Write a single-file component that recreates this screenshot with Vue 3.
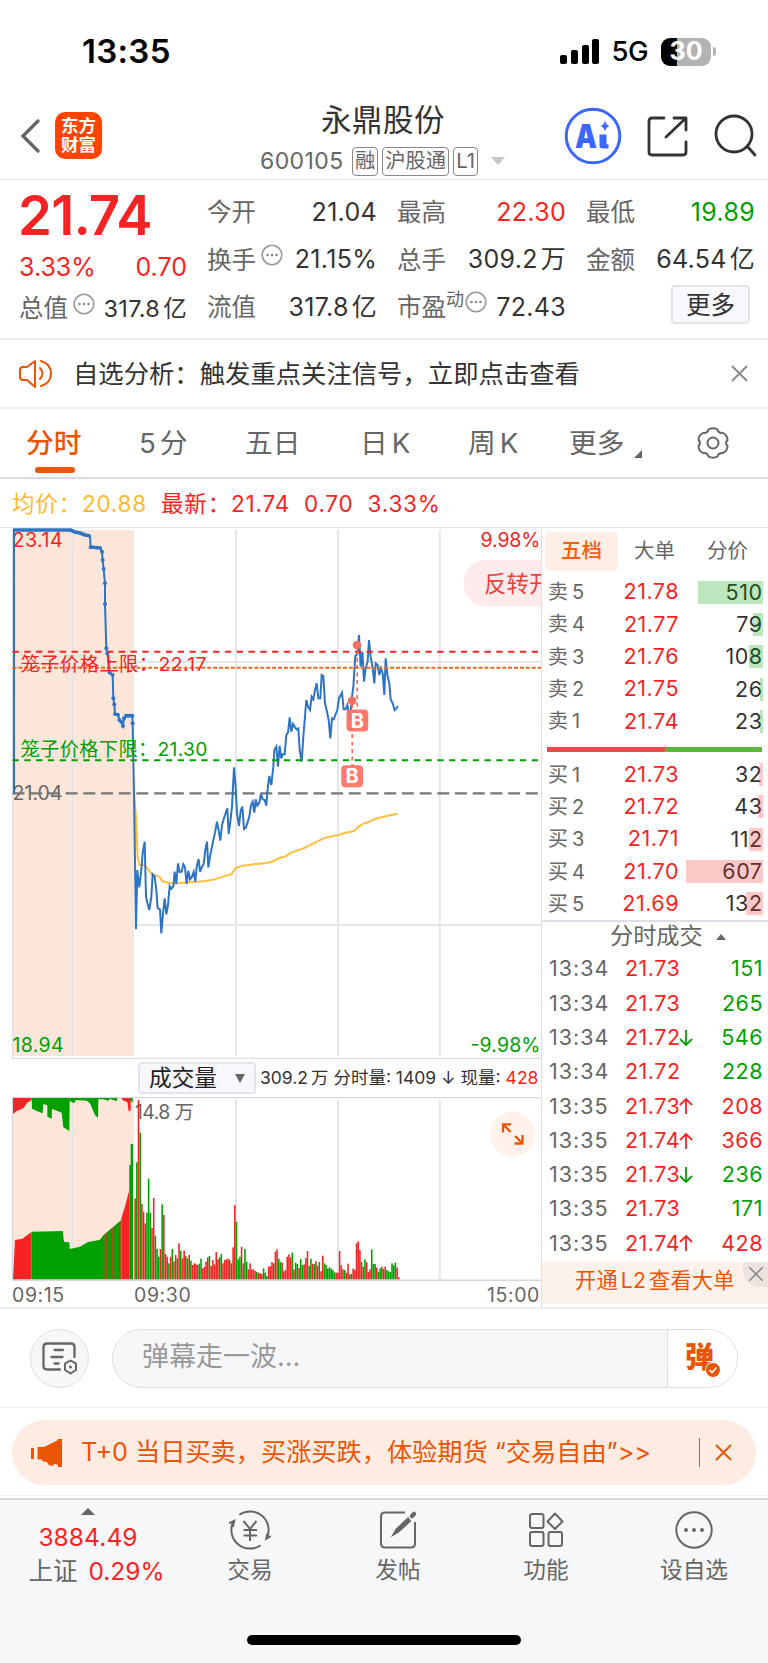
<template>
  <div class="page">
    <header class="status-bar">
      <span class="clock">13:35</span>
      <div class="status-right">
        <svg class="signal" width="40" height="26" viewBox="0 0 40 26">
          <rect x="0" y="16" width="7" height="9" rx="2" />
          <rect x="11" y="11" width="7" height="14" rx="2" />
          <rect x="22" y="6" width="7" height="19" rx="2" />
          <rect x="32" y="0" width="7" height="25" rx="2" />
        </svg>
        <span class="network">5G</span>
        <div class="battery"><span>30</span></div>
        <i class="battery-cap"></i>
      </div>
    </header>

    <nav class="title-bar">
      <svg class="back" width="22" height="36" viewBox="0 0 22 36">
        <path d="M19 3 L4 18 L19 33" fill="none" stroke="#666" stroke-width="3.4" stroke-linecap="round" />
      </svg>
      <div class="logo"><span>东方</span><span>财富</span></div>
      <div class="stock">
        <div class="stock-name">永鼎股份</div>
        <div class="stock-code">
          <span class="code">600105</span>
          <span class="tag">融</span>
          <span class="tag">沪股通</span>
          <span class="tag">L1</span>
          <i class="caret-down"></i>
        </div>
      </div>
      <div class="title-actions">
        <svg width="58" height="58" viewBox="0 0 58 58">
          <circle cx="29" cy="29" r="26.8" fill="none" stroke="#3a68fc" stroke-width="3" />
          <text x="11" y="41" textLength="22" lengthAdjust="spacingAndGlyphs" class="ai-text">A</text>
          <path d="M35.500 27.500 H42.500 V36.500 Q42.500 37.500 44.500 37.500 V41.500 H38.500 Q35.500 41.500 35.500 38 Z" fill="#3a68fc" />
          <path d="M41 13.500 Q42 18 45.500 19 Q42 20 41 24.500 Q40 20 36.500 19 Q40 18 41 13.500 Z" fill="#3a68fc" />
        </svg>
        <svg width="42" height="42" viewBox="0 0 42 42" fill="none" stroke="#333" stroke-width="2.8" stroke-linecap="round" stroke-linejoin="round">
          <path d="M17 3 H5 Q2 3 2 6 V37 Q2 40 5 40 H36 Q39 40 39 37 V27" />
          <path d="M27 3 H39 V15 M39 3 L19 22" />
        </svg>
        <svg width="43" height="43" viewBox="0 0 43 43" fill="none" stroke="#333" stroke-width="2.8">
          <circle cx="20" cy="20" r="18" />
          <path d="M33 32 L41 41" stroke-linecap="round" />
        </svg>
      </div>
    </nav>

    <section class="quote">
      <div class="quote-main">
        <div class="last-price">21.74</div>
        <div class="quote-row red change"><span>3.33%</span><span>0.70</span></div>
        <div class="quote-row small-val">
          <span class="label">总值<MoreDots /></span>
          <span class="value">317.8<b>亿</b></span>
        </div>
      </div>
      <div v-for="(col, i) in quoteCols" :key="i" class="quote-col">
        <div v-for="cell in col" :key="cell.label" class="quote-row">
          <span class="label">{{ cell.label }}<sup v-if="cell.sup">{{ cell.sup }}</sup><MoreDots v-if="cell.dots" /></span>
          <span class="value" :class="cell.color">{{ cell.value }}<b v-if="cell.unit">{{ cell.unit }}</b></span>
        </div>
        <button v-if="i === 2" class="btn-more">更多</button>
      </div>
    </section>

    <section class="notice">
      <svg width="34" height="30" viewBox="0 0 34 30" fill="none" stroke="#ea5504" stroke-width="2" stroke-linecap="round" stroke-linejoin="round">
        <path d="M16 2 L8 8 H4 Q1 8 1 11 V18 Q1 21 4 21 H8 L16 28 Z" />
        <path d="M21 9 Q26 14.500 21 20 M22 2 Q32 5 32 14.500 Q32 24 22 27" />
      </svg>
      <span class="notice-text">自选分析：触发重点关注信号，立即点击查看</span>
      <svg width="17" height="17" viewBox="0 0 17 17" stroke="#888" stroke-width="1.8"><path d="M1 1 L16 16 M16 1 L1 16" /></svg>
    </section>

    <section class="tabs">
      <div
        v-for="tab in tabs"
        :key="tab"
        class="tab"
        :class="{ active: tab === activeTab, mixed: /[5K]/.test(tab) }"
        @click="activeTab = tab"
      >
        {{ tab }}<i v-if="tab === '更多'" class="corner"></i>
      </div>
      <svg class="gear" width="34" height="34" viewBox="0 0 34 34" fill="none" stroke="#666" stroke-width="2">
        <path d="M12.500 3.500 Q17 1 21.500 3.500 Q22.500 7.500 27 7 Q31.500 9.500 31.500 14 Q28.500 17 31.500 20 Q31.500 24.500 27 27 Q22.500 26.500 21.500 30.500 Q17 33 12.500 30.500 Q11.500 26.500 7 27 Q2.500 24.500 2.500 20 Q5.500 17 2.500 14 Q2.500 9.500 7 7 Q11.500 7.500 12.500 3.500 Z" />
        <circle cx="17" cy="17" r="5.5" />
      </svg>
    </section>

    <section class="summary">
      <span class="avg">均价：20.88</span>
      <span class="red">最新：21.74</span>
      <span class="red">0.70</span>
      <span class="red">3.33%</span>
    </section>

    <main class="board">
      <div class="charts">
        <svg class="price-chart" width="541" height="531" viewBox="0 528 541 531">
          <rect x="12.500" y="530" width="121.500" height="526" fill="#fce6d9" />
          <g stroke="#e3e6ec" stroke-width="2">
            <path v-for="x in gridX" :key="x" :d="`M${x} 530 V1056`" />
            <path d="M134 662 H541 M134 925 H541" />
          </g>
          <path d="M12.500 528 V1058.300 H542" fill="none" stroke="#dcdfe6" stroke-width="1.300" />
          <g class="axis-text">
            <text x="12.500" y="547" textLength="50" fill="#f52323">23.14</text>
            <text x="480.500" y="547" textLength="60" fill="#f52323">9.98%</text>
            <text x="12.500" y="1051.500" textLength="51" fill="#00a000">18.94</text>
            <text x="470.500" y="1051.500" textLength="70" fill="#00a000">-9.98%</text>
            <text x="12.500" y="799.500" textLength="50" fill="#666">21.04</text>
          </g>
          <path d="M12.500 793.300 H538" stroke="#777" stroke-width="2.200" stroke-dasharray="12 5.700" />
          <g transform="translate(0 520) scale(0.33333)" fill="none" stroke-linejoin="round">
            <polyline :points="avgLine" stroke="#ffbe3c" stroke-width="6" />
            <polyline :points="priceLine" stroke="#2f74c3" stroke-width="6" stroke-linejoin="miter" />
            <polyline :points="auctionTop" stroke="#2f74c3" stroke-width="11" />
            <circle v-for="(p, i) in auctionDots" :key="i" :cx="p[0]" :cy="p[1]" r="6" fill="#2f74c3" />
          </g>
          <path d="M12.500 651.700 H539" stroke="#f52323" stroke-width="2" stroke-dasharray="6.300 5.500" />
          <path d="M12.500 667.700 H541" stroke="#ea6a1a" stroke-width="2" stroke-dasharray="4 1.900" />
          <path d="M12.500 760.300 H539" stroke="#00a000" stroke-width="2" stroke-dasharray="6.300 5.500" />
          <g class="cage-text">
            <text x="20.500" y="671" textLength="186" fill="#f52323">笼子价格上限：22.17</text>
            <text x="20.500" y="756" textLength="187" fill="#00a000">笼子价格下限：21.30</text>
          </g>
          <g stroke="#ff6a5c" stroke-width="1.700" stroke-dasharray="4 3.500">
            <path d="M357.200 650 V710 M352.200 704 V766" />
          </g>
          <g fill="#ff6f60">
            <circle cx="357" cy="645" r="4.300" />
            <circle cx="352" cy="700.700" r="4.300" />
            <rect x="346.500" y="709.500" width="21.700" height="22" rx="4" fill-opacity="0.920" />
            <rect x="341.300" y="765.300" width="21.700" height="22" rx="4" fill-opacity="0.920" />
          </g>
          <g class="badge-text">
            <text x="357.300" y="727.500">B</text>
            <text x="352.200" y="783.300">B</text>
          </g>
          <path d="M542 559.700 H487 A23.300 23.300 0 0 0 487 606.500 H542 Z" fill="#fdeaea" />
          <text x="484" y="592" class="pill-text">反转开</text>
        </svg>

        <div class="volume-head">
          <button class="indicator">成交量<i></i></button>
          <span class="volume-info">309.2<b>万</b> 分时量: 1409 ↓ 现量: <em>428</em></span>
        </div>

        <svg class="volume-chart" width="541" height="185" viewBox="0 1097 541 185">
          <rect x="12.500" y="1098" width="121.500" height="182" fill="#fce6d9" />
          <g stroke="#e3e6ec" stroke-width="2">
            <path v-for="x in gridX" :key="x" :d="`M${x} 1100 V1280`" />
          </g>
          <path d="M12.500 1280 V1097.500 H542" fill="none" stroke="#d5d8e0" stroke-width="1.300" />
          <path d="M12.500 1280.300 H542" stroke="#d5d8e0" stroke-width="1.500" />
          <text x="135" y="1119" textLength="59" class="axis-text" fill="#666">14.8 万</text>
          <g transform="translate(0 1050) scale(0.33333)">
            <path :d="auctionRed" fill="#f52323" />
            <path :d="auctionGreen" fill="#00a000" />
            <path d="M312 555 V688 M320 548 V688 M329 542 V688 M337 534 V688 M346 528 V688 M353 520 V688 M361 514 V688" stroke="#b4501e" stroke-width="3" />
            <rect v-for="(b, i) in bars" :key="i" :x="b.x" :y="688 - b.h" width="4.700" :height="b.h" :fill="b.fill" />
          </g>
          <circle cx="512.700" cy="1134" r="22.500" fill="#fff1eb" />
          <g fill="none" stroke="#ea5504" stroke-width="2.300">
            <path d="M511 1124.300 H503 V1132.500 M503 1124.300 L510.500 1132" />
            <path d="M514.500 1143.500 H522.500 V1135 M522.500 1143.500 L515 1136" />
          </g>
        </svg>

        <div class="time-axis"><span>09:15</span><span>09:30</span><span>15:00</span></div>
      </div>

      <aside class="depth">
        <div class="depth-tabs">
          <span class="on">五档</span><span>大单</span><span>分价</span>
        </div>
        <div class="levels">
          <div v-for="row in sells" :key="row.name" class="level">
            <span class="lv-name">{{ row.name }}</span>
            <span class="lv-price">{{ row.price }}</span>
            <span class="lv-vol"><i class="sell" :style="{ width: row.w + 'px' }"></i>{{ row.vol }}</span>
          </div>
        </div>
        <div class="ratio"></div>
        <div class="levels">
          <div v-for="row in buys" :key="row.name" class="level">
            <span class="lv-name">{{ row.name }}</span>
            <span class="lv-price">{{ row.price }}</span>
            <span class="lv-vol"><i class="buy" :style="{ width: row.w + 'px' }"></i>{{ row.vol }}</span>
          </div>
        </div>
        <div class="ticks-title">分时成交<i></i></div>
        <div class="ticks">
          <div v-for="(t, i) in ticks" :key="i" class="tick">
            <span class="tk-time">{{ t[0] }}</span>
            <span class="tk-price">{{ t[1] }}</span>
            <svg class="tk-arrow" width="14" height="18" viewBox="0 0 14 18" fill="none" stroke-width="1.800">
              <path v-if="t[2] === 'up'" d="M7 17 V2 M1 8 L7 2 L13 8" stroke="#f52323" />
              <path v-if="t[2] === 'down'" d="M7 1 V16 M1 10 L7 16 L13 10" stroke="#00a000" />
            </svg>
            <span class="tk-vol" :class="t[4]">{{ t[3] }}</span>
          </div>
        </div>
        <div class="l2">
          <span>开通<u>L2</u>查看大单</span>
          <div class="l2-close">
            <svg width="14" height="14" viewBox="0 0 14 14" stroke="#888" stroke-width="1.500"><path d="M0 0 L14 14 M14 0 L0 14" /></svg>
          </div>
        </div>
      </aside>
    </main>

    <section class="danmu">
      <div class="round-btn">
        <svg width="36" height="34" viewBox="0 0 36 34" fill="none" stroke="#666" stroke-width="2.300" stroke-linecap="round">
          <path d="M18 27.500 H5 Q1.500 27.500 1.500 24 V5 Q1.500 1.500 5 1.500 H29 Q32.500 1.500 32.500 5 V15" />
          <path d="M12.500 8 H21 M9.500 15 H20.500 M12.500 21.500 H16.500" />
          <path d="M28.500 18.500 L34 21.700 V28 L28.500 31.500 L23 28 V21.700 Z" stroke-width="2" stroke-linejoin="round" />
          <circle cx="28.500" cy="25" r="1.500" fill="#666" stroke="none" />
        </svg>
      </div>
      <div class="danmu-box">
        <span class="placeholder">弹幕走一波...</span>
        <div class="danmu-toggle">
          <span>弹</span>
          <svg width="16" height="16" viewBox="0 0 16 16"><circle cx="8" cy="8" r="7.500" fill="#ea5504" stroke="#fff" /><path d="M4.500 8 L7 10.500 L11.500 5.500" fill="none" stroke="#fff" stroke-width="1.600" /></svg>
        </div>
      </div>
    </section>

    <section class="promo-wrap">
      <div class="promo">
        <svg width="32" height="28" viewBox="0 0 32 28" fill="#ea5504">
          <path d="M0 9 H3 V20 H0 Z M6.500 8 H13 L27 1 V0 H31 V28 H27 V26 L23 24.500 V26.500 H18 L16 23 L12 22.500 L10.500 20.500 H6.500 Z" />
        </svg>
        <span class="promo-text">T+0 当日买卖，买涨买跌，体验期货 “交易自由”&gt;&gt;</span>
        <i class="promo-line"></i>
        <svg width="17" height="17" viewBox="0 0 17 17" stroke="#ea5504" stroke-width="1.900"><path d="M1 1 L16 16 M16 1 L1 16" /></svg>
      </div>
    </section>

    <footer class="bottom-bar">
      <div class="index">
        <i></i>
        <div class="index-val">3884.49</div>
        <div class="index-row"><span>上证</span><em>0.29%</em></div>
      </div>
      <div class="nav-item">
        <svg width="42" height="40" viewBox="0 0 42 40" fill="none" stroke="#666" stroke-width="2">
          <path d="M10.300 4.800 A18.600 18.600 0 0 1 37.800 28 M31.700 35.200 A18.600 18.600 0 0 1 4.200 12" />
          <path d="M0 13.300 L5.200 10.800 L4 17 M41.800 26 L37.300 28.700 L38.300 23.500" />
          <path d="M14.500 11 L21 19 L27.500 11 M14.500 20 H28 M14.500 25.500 H28 M21 19 V31" />
        </svg>
        <span>交易</span>
      </div>
      <div class="nav-item">
        <svg width="42" height="40" viewBox="0 0 42 40" fill="none" stroke="#666" stroke-width="2">
          <path d="M28 2.500 H8 Q4 2.500 4 6.500 V33.500 Q4 37.500 8 37.500 H34 Q38 37.500 38 33.500 V12" />
          <path d="M31 8.500 L19.500 19.500 L16.500 24.500 L21 22 L33 11 Z" fill="#666" />
          <path d="M35 6 L37 4" stroke-width="4.500" stroke-linecap="round" />
        </svg>
        <span>发帖</span>
      </div>
      <div class="nav-item">
        <svg width="42" height="40" viewBox="0 0 42 40" fill="none" stroke="#666" stroke-width="2">
          <rect x="5" y="4" width="13.500" height="14" rx="2" />
          <rect x="5" y="22" width="13.500" height="14" rx="2" />
          <rect x="23.500" y="22" width="13.500" height="14" rx="2" />
          <path d="M30 3.500 L37.500 11.500 L30 19 L22.500 11.500 Z" stroke-linejoin="round" />
        </svg>
        <span>功能</span>
      </div>
      <div class="nav-item">
        <svg width="42" height="40" viewBox="0 0 42 40" fill="none" stroke="#666" stroke-width="2">
          <circle cx="21" cy="20" r="17.700" />
          <g fill="#666" stroke="none"><circle cx="13" cy="20" r="2" /><circle cx="21" cy="20" r="2" /><circle cx="29" cy="20" r="2" /></g>
        </svg>
        <span>设自选</span>
      </div>
    </footer>
    <div class="home"><i></i></div>
  </div>
</template>

<script setup>
import { ref, h } from 'vue'

const MoreDots = () => h('svg', { class: 'dots', width: 22, height: 22, viewBox: '0 0 22 22' }, [
  h('circle', { cx: 11, cy: 11, r: 9.8, fill: 'none', stroke: '#999', 'stroke-width': 1.6 }),
  ...[6.5, 11, 15.5].map(cx => h('circle', { cx, cy: 11, r: 1.3, fill: '#888' }))
])

const quoteCols = [
  [
    { label: '今开', value: '21.04' },
    { label: '换手', value: '21.15%', dots: true },
    { label: '流值', value: '317.8', unit: '亿' }
  ],
  [
    { label: '最高', value: '22.30', color: 'red' },
    { label: '总手', value: '309.2', unit: '万' },
    { label: '市盈', value: '72.43', sup: '动', dots: true }
  ],
  [
    { label: '最低', value: '19.89', color: 'green' },
    { label: '金额', value: '64.54', unit: '亿' }
  ]
]

const tabs = ['分时', '5分', '五日', '日K', '周K', '更多']
const activeTab = ref('分时')

const gridX = [73, 236, 338, 439.7]

// Точки линий заданы в третях пикселя
const shift = (str, dx, dy) => str.split(' ').map(p => {
  const [x, y] = p.split(',').map(Number)
  return `${x + dx},${y + dy}`
}).join(' ')

const auctionTop = '40,30 212,30 222,35 240,39 255,45 270,48'
const auction = '42,820 42,30 212,30 222,36 240,40 255,45 270,48 272,82 300,84 306,95 308,120 311,147 315,190 315,252 319,385 322,400 327,425 329,458 338,465 340,535 343,553 345,582 354,584 358,600 364,606 369,618 372,595 378,587 397,587 398,610 402,820'
const auctionDots = auction.split(' ').slice(7, -1).map(p => p.split(',').map(Number))
  .concat([[280, 82], [290, 83], [384, 587], [390, 587]])

const morning = shift('42,40 48,448 52,270 58,322 64,270 68,220 74,185 78,350 83,372 88,390 94,350 98,283 104,290 109,330 113,385 120,388 124,460 129,400 134,355 139,403 144,375 149,318 154,326 160,320 164,275 169,312 174,250 179,276 185,275 190,253 195,262 200,312 205,272 210,298 216,290 221,276 226,305 230,260 236,237 240,275 246,260 251,252 256,210 261,185 265,262 270,230 276,200 285,158 291,125 296,152 301,182 306,135 314,108 322,85 326,162 331,125 336,80 342,-38 347,20 351,100 357,138 362,92 367,80 372,147 378,142 388,110 393,75 398,65 403,98 407,58 412,77 418,68 423,42 428,58 434,60 439,77 443,25 448,-12 454,15', 360, 780)
const afternoon = shift('10,740 13,690 19,680 24,740 29,678 34,715 38,703 44,703 49,645 54,638 59,592 64,635 69,612 75,622 80,628 85,625 89,690 95,725 100,650 105,590 109,540 114,560 120,570 125,530 130,538 135,510 140,490 145,535 151,535 155,465 160,468 165,550 171,575 176,600 181,655 186,595 191,598 196,585 202,570 207,535 216,518 221,568 227,568 232,555 236,580 240,600 246,530 250,500 256,408 262,402 267,345 272,440 277,395 282,485 287,445 293,425 297,360 302,410 308,445 313,490 317,430 323,435 328,465 333,445 338,460 343,525 347,415 352,465 358,490 362,538 368,550 374,570 378,566 384,558', 810, 0)
const priceLine = [auction, morning, afternoon].join(' ')

const avgLine = shift('42,40 48,110 53,235 59,256 72,254 80,262 95,283 118,290 128,304 150,310 180,309 250,304 280,299 310,290 335,282 347,264 370,257 400,253 440,249 460,244 475,235 495,230 515,217 550,205 580,190 615,173 652,166 670,160 702,153 715,140 735,129 745,127 762,118 790,110 832,101', 360, 780)

const auctionRed = 'M39 688 L45 570 68 566 75 560 95 546 V688 Z M39 144 V192 L50 183 70 175 80 160 95 150 V144 Z M364 688 V504 L375 470 388 420 V688 Z M364 144 L370 152 382 156 386 184 392 182 V144 Z'
const auctionGreen = 'M95 688 V545 L188 543 192 575 208 577 209 597 240 590 262 577 300 569 310 556 364 510 V688 Z M388 688 V345 H392 V282 H399 V688 Z M95 144 L96 176 112 184 128 190 130 162 142 166 V200 L155 206 156 176 185 188 190 232 208 243 209 152 222 160 228 150 260 152 270 160 285 195 294 204 295 148 310 148 325 152 330 146 350 154 352 144 Z M391 144 V152 L398 158 V144 Z'

const volumes = 'r241 g349 r536 g438 r224 r201 r166 g198 g300 g198 r152 r242 g129 g89 g66 r89 g223 r191 r74 r66 g46 r66 g89 r51 r71 g61 r106 g84 r61 r84 g68 g61 r71 g54 r41 r46 r43 r41 g45 g60 r31 r36 r51 r64 g68 r38 r56 r43 r80 r58 g64 g74 r46 r56 r58 r60 g56 r46 r94 r221 g170 g58 g66 r96 r46 g89 g51 r28 r46 r28 r28 r23 g20 r18 r16 r14 g31 g18 g8 r36 r38 r50 g46 r81 r88 g60 g50 r48 r22 r26 r66 r73 r64 g78 r28 g48 g44 r32 g59 g41 r43 r62 r83 g38 g60 r45 g44 r52 r38 g50 r22 r69 g46 g41 g30 g34 g30 g26 g19 r18 r18 r83 r40 r28 g26 r18 r45 g13 g15 r30 r26 r106 r112 r86 g51 r36 g58 r49 r20 r28 g88 g44 g44 r33 g20 g31 r36 g29 r36 g26 g22 g20 g46 g40 g48 r34 r4'.split(' ')
const step = (1194 - 403) / (volumes.length - 1)
const bars = volumes.map((v, i) => ({
  x: 403 + i * step,
  h: Number(v.slice(1)) + 2,
  fill: v[0] === 'r' ? '#f52323' : '#00a000'
}))

const sells = [
  { name: '卖5', price: '21.78', vol: 510, w: 64.5 },
  { name: '卖4', price: '21.77', vol: 79, w: 10 },
  { name: '卖3', price: '21.76', vol: 108, w: 14 },
  { name: '卖2', price: '21.75', vol: 26, w: 3 },
  { name: '卖1', price: '21.74', vol: 23, w: 3 }
]
const buys = [
  { name: '买1', price: '21.73', vol: 32, w: 4 },
  { name: '买2', price: '21.72', vol: 43, w: 5 },
  { name: '买3', price: '21.71', vol: 112, w: 14 },
  { name: '买4', price: '21.70', vol: 607, w: 77 },
  { name: '买5', price: '21.69', vol: 132, w: 16.5 }
]

const ticks = [
  ['13:34', '21.73', '', 151, 'green'],
  ['13:34', '21.73', '', 265, 'green'],
  ['13:34', '21.72', 'down', 546, 'green'],
  ['13:34', '21.72', '', 228, 'green'],
  ['13:35', '21.73', 'up', 208, 'red'],
  ['13:35', '21.74', 'up', 366, 'red'],
  ['13:35', '21.73', 'down', 236, 'green'],
  ['13:35', '21.73', '', 171, 'green'],
  ['13:35', '21.74', 'up', 428, 'red']
]
</script>

<style>
body { background: #fff; }
</style>

<style scoped>
.page {
  width: 768px;
  height: 1663px;
  overflow: hidden;
  background: #fff;
  color: #333;
  font-family: Inter, "Noto Sans CJK SC", sans-serif;
  font-size: 24px;
  line-height: 1;
  white-space: nowrap;
}
.page * { box-sizing: border-box; }
svg { display: block; flex: none; }
b { font-weight: 400; margin-left: 3px; }
em { font-style: normal; color: #f52323; }
.red { color: #f52323; }
.green { color: #00a000; }

.status-bar {
  height: 92px;
  padding: 11px 52px 0 82px;
  display: flex;
  align-items: center;
  justify-content: space-between;
  color: #000;
}
.clock { font-size: 33px; font-weight: 600; letter-spacing: 0.3px; }
.status-right { display: flex; align-items: center; }
.network { font-size: 27.5px; font-weight: 500; margin-left: 11px; letter-spacing: -0.5px; }
.battery {
  width: 50px;
  height: 28px;
  margin-left: 13px;
  border-radius: 9px;
  background: linear-gradient(90deg, #000 32%, #b3b3b3 32%);
  color: #fff;
  font-size: 25px;
  font-weight: 700;
  display: flex;
  align-items: center;
  justify-content: center;
}
.battery-cap { width: 3px; height: 9px; margin-left: 2px; background: #b3b3b3; border-radius: 0 4px 4px 0; }

.title-bar {
  height: 88px;
  padding-left: 19px;
  display: flex;
  align-items: center;
  border-bottom: 1px solid #ebebeb;
}
.logo {
  width: 47px;
  height: 47px;
  margin: -1px 0 0 14px;
  border-radius: 10px;
  background: #ff4400;
  color: #fff;
  font-size: 17.5px;
  font-weight: 700;
  line-height: 19px;
  display: flex;
  flex-direction: column;
  align-items: center;
  justify-content: center;
}
.stock { width: 246px; margin-left: 158px; padding-top: 6px; }
.stock-name { font-size: 30.5px; letter-spacing: 0.5px; color: #333; line-height: 36px; padding-left: 61px; }
.stock-code { height: 29px; margin-top: 9px; display: flex; align-items: center; color: #666; }
.code { font-size: 23px; width: 92px; flex: none; letter-spacing: 0.4px; }
.tag {
  border: 1.5px solid #888;
  border-radius: 4px;
  height: 29px;
  line-height: 26px;
  padding: 0 2px;
  margin-right: 4px;
  font-size: 20.3px;
}
.caret-down { margin-left: 9px; border: 7px solid transparent; border-top: 8px solid #c8c8c8; border-bottom: 0; flex: none; }
.title-actions { display: flex; align-items: center; margin-left: 58px; gap: 25px; }
.ai-text { font: 900 33px Inter, sans-serif; fill: #3a68fc; }

.quote {
  height: 160px;
  padding: 8px 14px 0 19px;
  display: grid;
  grid-template-columns: 168px 170px 169px 169px;
  column-gap: 20px;
  border-bottom: 2px solid #ebebeb;
}
.last-price {
  height: 54px;
  font-size: 54.5px;
  line-height: 54px;
  font-weight: 600;
  letter-spacing: -0.8px;
  margin-left: -1px;
  color: #f52323;
}
.quote-main .change { height: 48px; padding-top: 2px; letter-spacing: 0; }
.quote-row { height: 47.5px; padding-top: 1px; display: flex; align-items: center; justify-content: space-between; letter-spacing: 0.3px; font-size: 25px; }
.quote-main .small-val { height: 36px; }
.quote-main .value { font-size: 23.5px; }
.label { display: flex; align-items: center; font-size: 24.5px; color: #666; letter-spacing: 0; }
.label sup { font-size: 18px; align-self: flex-start; margin-top: -4px; line-height: 18px; }
:deep(.dots) { margin: -10px 0 0 5px; }
sup + :deep(.dots) { margin-left: 1px; }
.btn-more {
  display: block;
  width: 79px;
  height: 39px;
  margin: 2px 5px 0 auto;
  padding: 0;
  border: 2px solid #e2e5eb;
  border-radius: 4px;
  background: #f6f8fb;
  color: #333;
  font-family: inherit;
  font-size: 24.5px;
  line-height: 34px;
}

.notice { height: 69px; padding: 0 20px 0 19px; display: flex; align-items: center; border-bottom: 2px solid #ebecee; }
.notice-text { flex: 1; margin-left: 20px; font-size: 25.35px; }

.tabs {
  height: 70px;
  padding-left: 26px;
  display: grid;
  grid-template-columns: 113px 106px 115px 108px 101px 128px 40px;
  border-bottom: 2px solid #d9dbe2;
  color: #666;
  font-size: 27.7px;
}
.tab { height: 68px; line-height: 69px; display: flex; }
.tab.mixed { letter-spacing: 4px; }
.tab.active { color: #ea5504; font-weight: 500; flex-direction: column; }
.tab.active::after { content: ''; width: 40px; height: 6px; border-radius: 3px; background: #ea5504; margin: -11px 0 0 9px; flex: none; }
.corner { width: 0; border-left: 8px solid transparent; border-bottom: 8px solid #666; height: 0; margin: 41px 0 0 10px; }
.gear { margin: 17px 0 0 -1px; }

.summary { height: 48px; padding: 3px 12px 0; display: flex; align-items: center; gap: 14px; font-size: 22.5px; letter-spacing: 0.8px; }
.avg { color: #ffb92e; }

.board { height: 782px; display: grid; grid-template-columns: 541px 227px; border-bottom: 2px solid #efefef; }
.charts { border-top: 1px solid #e0e2e8; }
.axis-text { font-size: 19.5px; }
.cage-text { font-size: 19.3px; }
.badge-text { font-size: 20px; font-weight: 700; fill: #fff; text-anchor: middle; }
.pill-text { font-size: 22.5px; fill: #e8423f; }
.volume-head { height: 38px; padding-left: 138px; display: flex; align-items: center; }
.indicator {
  width: 118px;
  height: 32px;
  padding: 0 9px;
  border: 2px solid #e2e5eb;
  border-radius: 4px;
  background: #f6f8fb;
  color: #222;
  font-family: inherit;
  font-size: 22.7px;
  line-height: 28px;
  display: flex;
  align-items: center;
  justify-content: space-between;
}
.indicator i { border: 5px solid transparent; border-top: 9px solid #666; border-bottom: 0; }
.volume-info { font-size: 17.5px; margin-left: 4px; }
.time-axis { height: 25px; display: grid; grid-template-columns: 122px 353px 54px; padding-left: 12px; padding-top: 4px; font-size: 19.5px; letter-spacing: 0.6px; color: #666; }

.depth { border-left: 1px solid #dcdfe6; border-top: 1px solid #e0e2e8; height: 780px; }
.depth-tabs { height: 48px; padding: 4px 0 0 3px; display: flex; font-size: 20.5px; color: #666; }
.depth-tabs span { width: 73px; height: 39px; line-height: 38px; text-align: center; }
.depth-tabs .on { background: #feeee6; color: #ff5c0a; border-radius: 5px; font-weight: 500; }
.levels { font-size: 21.5px; letter-spacing: 0.5px; }
.level { height: 32.3px; display: grid; grid-template-columns: 60px 77px 83.500px; align-items: center; }
.lv-name { padding-left: 6px; color: #666; font-size: 20px; letter-spacing: 4px; }
.lv-price { text-align: right; color: #f52323; }
.lv-vol { position: relative; text-align: right; color: #333; line-height: 23px; }
.lv-vol i { position: absolute; right: 0; top: 0; height: 23px; }
.sell { background: rgba(0, 160, 0, 0.26); }
.buy { background: rgba(245, 35, 35, 0.25); }
.ratio { width: 215px; height: 5px; margin: 10px 0 6px 5px; background: linear-gradient(125deg, #ee4848 55%, #57b83a 55%); }
.ticks-title {
  height: 32px;
  border-top: 2px solid #dcdfe6;
  display: flex;
  align-items: center;
  padding-left: 68px;
  font-size: 23.2px;
  color: #666;
}
.ticks-title i { margin-left: 13px; border: 5px solid transparent; border-bottom: 6px solid #666; border-top: 0; }
.ticks { font-size: 21.5px; letter-spacing: 0.5px; }
.tick { height: 34.3px; display: flex; align-items: center; padding-left: 7px; }
.tk-time { width: 76px; color: #666; letter-spacing: 1px; }
.tk-price { width: 54px; text-align: right; color: #f52323; }
.tk-vol { width: 69px; text-align: right; margin-left: auto; margin-right: 5px; }
.l2 { height: 42px; margin-top: 1px; background: #fdf1ec; color: #ea5504; font-size: 21.2px; display: flex; justify-content: space-between; padding-left: 33px; line-height: 37px; letter-spacing: 0.2px; }
.l2 u { text-decoration: none; margin: 0 3px; }
.l2-close { width: 25px; height: 25px; background: #ece3df; border-bottom-left-radius: 16px; display: flex; align-items: center; justify-content: center; }

.danmu { height: 99px; padding: 20px 30px 0; display: flex; border-bottom: 1px solid #f0f0f0; }
.round-btn { width: 59px; height: 59px; border: 1.5px solid #dcdfe6; border-radius: 50%; background: #f6f7f9; display: flex; align-items: center; justify-content: center; }
.danmu-box { width: 626px; height: 59px; margin-left: 23px; border: 1.5px solid #dcdfe6; border-radius: 30px; background: #f6f7f9; display: flex; overflow: hidden; }
.placeholder { flex: 1; padding-left: 29px; line-height: 53px; font-size: 27px; color: #999; }
.danmu-toggle { width: 70px; border-left: 1.5px solid #dcdfe6; background: #fff; display: flex; padding: 13px 0 0 17px; color: #ea5504; font-size: 29px; font-weight: 900; }
.danmu-toggle svg { margin: 19px 0 0 -9px; }

.promo-wrap { height: 88px; padding: 12px 12px 0; border-bottom: 1px solid #f1f1f1; }
.promo { height: 65px; border-radius: 33px; background: #feece3; padding: 0 24px 0 19px; display: flex; align-items: center; color: #ea5504; }
.promo-text { flex: 1; margin-left: 18px; font-size: 25.2px; }
.promo-line { width: 1.5px; height: 29px; background: #ea5504; margin-right: 15px; }

.bottom-bar {
  height: 124px;
  margin-top: 2px;
  border-top: 2px solid #dcdde0;
  background: #f6f7f9;
  display: grid;
  grid-template-columns: 176px 148px 148px 148px 148px;
  color: #666;
}
.index { display: flex; flex-direction: column; align-items: center; }
.index > i { border: 7px solid transparent; border-bottom: 7px solid #666; border-top: 0; margin-top: 8px; }
.index-val { font-size: 24.5px; line-height: 30px; margin-top: 7px; color: #f52323; letter-spacing: 0.1px; }
.index-row { display: flex; gap: 11px; font-size: 24.5px; line-height: 30px; margin-top: 4px; padding-left: 17px; }
.nav-item { display: flex; flex-direction: column; align-items: center; font-size: 22.7px; padding-top: 10px; }
.nav-item span { line-height: 30px; margin-top: 5px; }
.home { height: 41px; background: #f6f7f9; display: flex; justify-content: center; padding-top: 13px; }
.home i { width: 274px; height: 10px; border-radius: 5px; background: #000; }
</style>
